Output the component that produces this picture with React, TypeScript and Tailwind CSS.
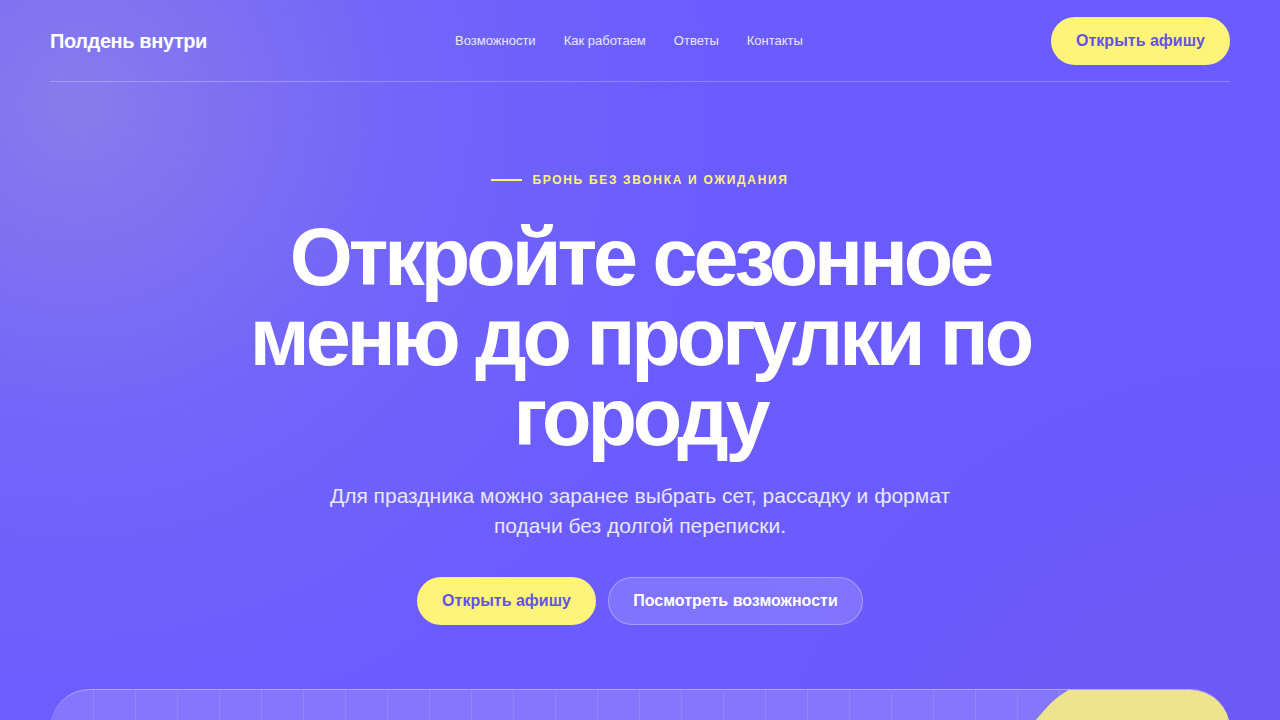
import React from "react";

export default function App() {
  const lines = Array.from({ length: 30 }, (_, i) => i);
  return (
    <div
      className="relative min-h-screen w-full overflow-hidden bg-[#6a5cff] text-white"
      style={{ fontFamily: '"Liberation Sans", Arial, sans-serif' }}
    >
      <div className="pointer-events-none absolute inset-0 bg-[radial-gradient(circle_at_6%_12%,rgba(160,150,220,0.55),rgba(140,130,230,0.25)_22%,rgba(106,92,255,0)_45%)]" />
      <div className="pointer-events-none absolute inset-0 bg-[radial-gradient(circle_at_100%_100%,rgba(120,80,220,0.35),rgba(106,92,255,0)_40%)]" />
      <div className="relative">
        <header className="mx-[50px] flex h-[82px] items-center justify-between border-b border-white/25 pt-[1px]">
          <div className="text-[20px] font-bold tracking-[-0.02em]">Полдень внутри</div>
          <nav className="flex items-center gap-[28px] text-[13px] text-white/85">
            <span>Возможности</span>
            <span>Как работаем</span>
            <span>Ответы</span>
            <span>Контакты</span>
          </nav>
          <button className="h-[48px] w-[179px] rounded-full bg-[#fff47a] text-[16px] font-bold text-[#6352e6]">
            Открыть афишу
          </button>
        </header>

        <main className="flex flex-col items-center pt-[90px]">
          <div className="flex items-center gap-[10px] text-[12px] font-bold leading-[16px] tracking-[0.14em] text-[#fff27a]">
            <span className="h-[2px] w-[31px] bg-[#fff27a]" />
            <span>БРОНЬ БЕЗ ЗВОНКА И ОЖИДАНИЯ</span>
          </div>
          <h1 className="mt-[29px] max-w-[820px] text-center text-[81px] font-bold leading-[80px] tracking-[-0.05em]">
            Откройте сезонное меню до прогулки по городу
          </h1>
          <p className="mt-[24px] max-w-[660px] text-center text-[21px] leading-[30px] text-white/85">
            Для праздника можно заранее выбрать сет, рассадку и формат подачи без долгой переписки.
          </p>
          <div className="mt-[36px] flex items-center gap-[12px]">
            <button className="h-[48px] w-[179px] rounded-full bg-[#fff47a] text-[16px] font-bold text-[#6352e6]">
              Открыть афишу
            </button>
            <button className="h-[48px] w-[255px] rounded-full border border-white/30 bg-white/15 text-[16px] font-bold text-white">
              Посмотреть возможности
            </button>
          </div>

          <div className="relative mx-[50px] mt-[64px] h-[200px] self-stretch overflow-hidden rounded-[40px] border-t border-white/35 bg-[#8577fc]">
            <div className="absolute inset-0 ml-[2px] flex">
              {lines.map((i) => (
                <div key={i} className="h-full w-[42px] shrink-0 border-r border-white/10" />
              ))}
            </div>
            <div className="absolute left-[925px] top-[-10px] h-[220px] w-[400px] skew-x-[-41deg] rounded-[28px] bg-[#ede48c]" />
          </div>
        </main>
      </div>
    </div>
  );
}
